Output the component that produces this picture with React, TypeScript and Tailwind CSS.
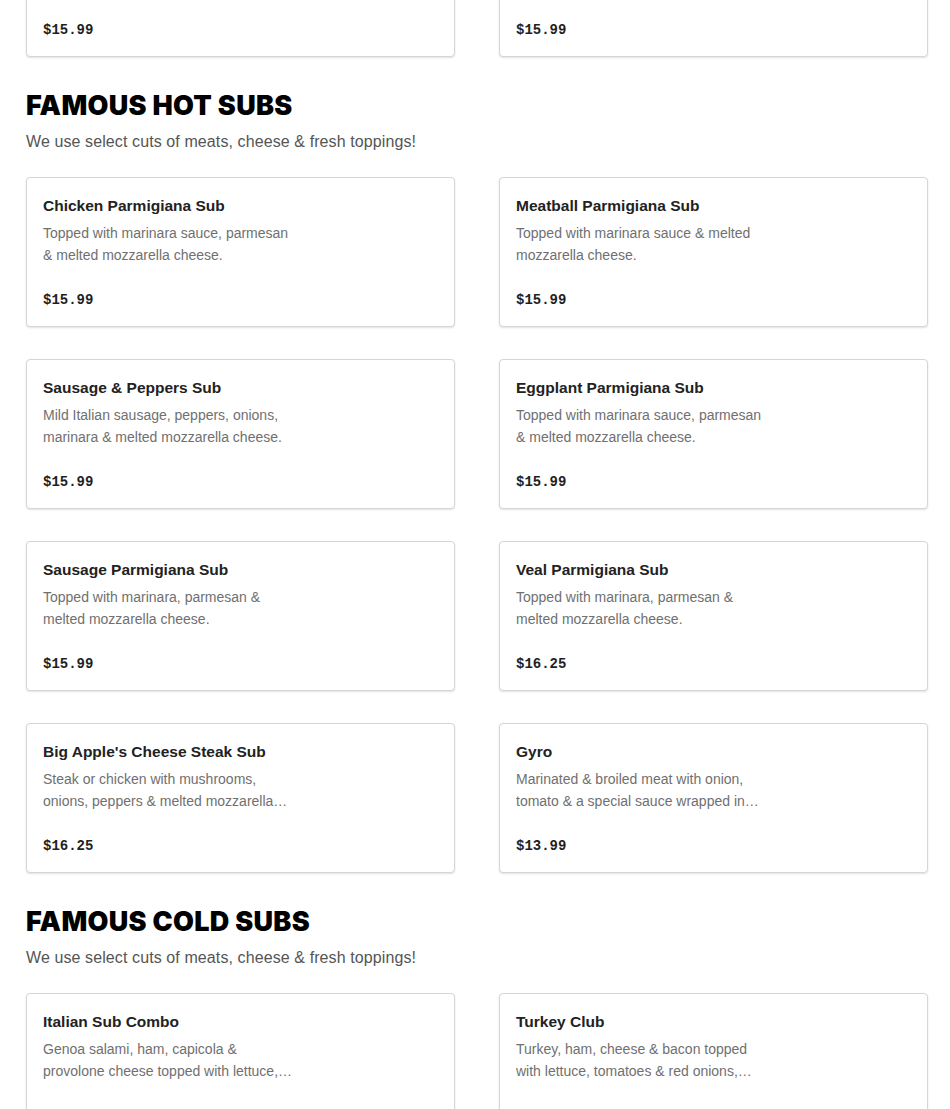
import React from "react";

type Item = { name: string; desc: string; price: string };

const prevItems: Item[] = [
  { name: "Hot Pastrami Sub", desc: "Lean pastrami with melted swiss cheese & mustard.", price: "$15.99" },
  { name: "Corned Beef Sub", desc: "Corned beef with melted swiss cheese & mustard.", price: "$15.99" },
];

const hotItems: Item[] = [
  { name: "Chicken Parmigiana Sub", desc: "Topped with marinara sauce, parmesan & melted mozzarella cheese.", price: "$15.99" },
  { name: "Meatball Parmigiana Sub", desc: "Topped with marinara sauce & melted mozzarella cheese.", price: "$15.99" },
  { name: "Sausage & Peppers Sub", desc: "Mild Italian sausage, peppers, onions, marinara & melted mozzarella cheese.", price: "$15.99" },
  { name: "Eggplant Parmigiana Sub", desc: "Topped with marinara sauce, parmesan & melted mozzarella cheese.", price: "$15.99" },
  { name: "Sausage Parmigiana Sub", desc: "Topped with marinara, parmesan & melted mozzarella cheese.", price: "$15.99" },
  { name: "Veal Parmigiana Sub", desc: "Topped with marinara, parmesan & melted mozzarella cheese.", price: "$16.25" },
  { name: "Big Apple's Cheese Steak Sub", desc: "Steak or chicken with mushrooms, onions, peppers & melted mozzarella cheese.", price: "$16.25" },
  { name: "Gyro", desc: "Marinated & broiled meat with onion, tomato & a special sauce wrapped in pita.", price: "$13.99" },
];

const coldItems: Item[] = [
  { name: "Italian Sub Combo", desc: "Genoa salami, ham, capicola & provolone cheese topped with lettuce, tomatoes & onions.", price: "$15.99" },
  { name: "Turkey Club", desc: "Turkey, ham, cheese & bacon topped with lettuce, tomatoes & red onions, mayo.", price: "$15.99" },
];

function Card({ item }: { item: Item }) {
  return (
    <div className="h-[150px] rounded-[4px] border border-[#d6d6d6] bg-white px-4 pt-4 pb-4 shadow-[0_1px_2px_rgba(0,0,0,0.12)] flex flex-col">
      <div className="text-[15.5px] leading-6 font-semibold text-[#222222]">{item.name}</div>
      <div className="mt-1 w-[252px] text-[14px] leading-[22px] text-[#707070] line-clamp-2">{item.desc}</div>
      <div className="mt-auto text-[14px] leading-5 font-bold text-[#1f1f1f] font-['Liberation_Mono',monospace]">{item.price}</div>
    </div>
  );
}

function Grid({ items }: { items: Item[] }) {
  return (
    <div className="grid grid-cols-2 gap-x-[44px] gap-y-[32px]">
      {items.map((it, i) => (
        <Card key={i} item={it} />
      ))}
    </div>
  );
}

function Section({ title, items }: { title: string; items: Item[] }) {
  return (
    <div>
      <h2 className="mt-[31px] text-[27px] leading-9 font-black tracking-[0.3px] text-black font-['Inter',sans-serif]">{title}</h2>
      <p className="mt-0 text-[16px] leading-9 tracking-[0.1px] text-[#555555]">We use select cuts of meats, cheese &amp; fresh toppings!</p>
      <div className="mt-[17px]">
        <Grid items={items} />
      </div>
    </div>
  );
}

export default function App() {
  return (
    <div className="h-[1109px] overflow-hidden bg-white pl-[26px] pr-[22px] font-['Liberation_Sans',Arial,sans-serif]">
      <div className="-mt-[93px]">
        <Grid items={prevItems} />
      </div>
      <Section title="FAMOUS HOT SUBS" items={hotItems} />
      <Section title="FAMOUS COLD SUBS" items={coldItems} />
    </div>
  );
}
